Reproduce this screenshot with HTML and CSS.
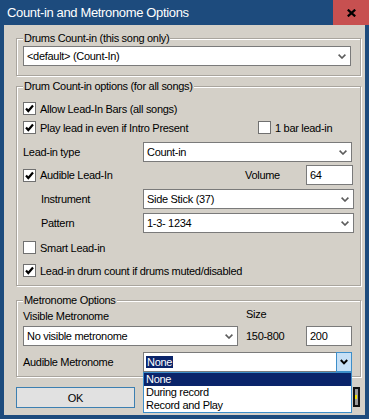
FILE: index.html
```html
<!DOCTYPE html>
<html lang="en">
<head>
    <meta charset="UTF-8">
    <title>Count-in and Metronome Options</title>
    <link rel="stylesheet" href="styles.css">
</head>
<body>
<div class="window">
    <div class="titlebar">
        <span class="title">Count-in and Metronome Options</span>
        <span class="close">
            <svg width="9" height="8" viewBox="0 0 9 8"><path d="M0.8 0.6 L8.2 7.4 M8.2 0.6 L0.8 7.4" stroke="#000" stroke-width="2.2" fill="none"/></svg>
        </span>
    </div>

    <div class="client">
        <fieldset class="group group-song">
            <legend>Drums Count-in (this song only)</legend>
            <div class="group-body song-body">
                <div class="combo combo-song">
                    <span class="combo-text">&lt;default&gt; (Count-In)</span>
                    <svg class="chev" width="8" height="5" viewBox="0 0 8 5"><polyline points="0.6,0.6 4,4 7.4,0.6" fill="none" stroke="#5c5c5c" stroke-width="1.6"/></svg>
                </div>
            </div>
        </fieldset>

        <fieldset class="group group-all">
            <legend>Drum Count-in options (for all songs)</legend>
            <div class="group-body all-body">
                <div class="row row-check">
                    <label class="check"><span class="box"><svg width="11" height="11" viewBox="0 0 11 11"><polyline points="2,5.5 4.3,8 9,2.5" fill="none" stroke="#000" stroke-width="2.2"/></svg></span>Allow Lead-In Bars (all songs)</label>
                </div>
                <div class="row row-check">
                    <label class="check w-play"><span class="box"><svg width="11" height="11" viewBox="0 0 11 11"><polyline points="2,5.5 4.3,8 9,2.5" fill="none" stroke="#000" stroke-width="2.2"/></svg></span>Play lead in even if Intro Present</label>
                    <label class="check"><span class="box"></span>1 bar lead-in</label>
                </div>
                <div class="row row-field mt5">
                    <span class="field-label">Lead-in type</span>
                    <div class="combo combo-mid">
                        <span class="combo-text">Count-in</span>
                        <svg class="chev" width="8" height="5" viewBox="0 0 8 5"><polyline points="0.6,0.6 4,4 7.4,0.6" fill="none" stroke="#5c5c5c" stroke-width="1.6"/></svg>
                    </div>
                </div>
                <div class="row row-field mt3">
                    <label class="check w-audible"><span class="box"><svg width="11" height="11" viewBox="0 0 11 11"><polyline points="2,5.5 4.3,8 9,2.5" fill="none" stroke="#000" stroke-width="2.2"/></svg></span>Audible Lead-In</label>
                    <span class="w-volume">Volume</span>
                    <div class="edit edit-volume">64</div>
                </div>
                <div class="row row-field mt4">
                    <span class="field-label sub">Instrument</span>
                    <div class="combo combo-sub">
                        <span class="combo-text">Side Stick (37)</span>
                        <svg class="chev" width="8" height="5" viewBox="0 0 8 5"><polyline points="0.6,0.6 4,4 7.4,0.6" fill="none" stroke="#5c5c5c" stroke-width="1.6"/></svg>
                    </div>
                </div>
                <div class="row row-field mt4">
                    <span class="field-label sub">Pattern</span>
                    <div class="combo combo-sub">
                        <span class="combo-text">1-3- 1234</span>
                        <svg class="chev" width="8" height="5" viewBox="0 0 8 5"><polyline points="0.6,0.6 4,4 7.4,0.6" fill="none" stroke="#5c5c5c" stroke-width="1.6"/></svg>
                    </div>
                </div>
                <div class="row row-check mt5">
                    <label class="check"><span class="box"></span>Smart Lead-in</label>
                </div>
                <div class="row row-check mt4">
                    <label class="check"><span class="box"><svg width="11" height="11" viewBox="0 0 11 11"><polyline points="2,5.5 4.3,8 9,2.5" fill="none" stroke="#000" stroke-width="2.2"/></svg></span>Lead-in drum count if drums muted/disabled</label>
                </div>
            </div>
        </fieldset>

        <fieldset class="group group-metro">
            <legend>Metronome Options</legend>
            <div class="group-body metro-body">
                <div class="row row-labels">
                    <span class="w-visible">Visible Metronome</span>
                    <span class="size-label">Size</span>
                </div>
                <div class="row row-field mt3">
                    <div class="combo combo-visible">
                        <span class="combo-text">No visible metronome</span>
                        <svg class="chev" width="8" height="5" viewBox="0 0 8 5"><polyline points="0.6,0.6 4,4 7.4,0.6" fill="none" stroke="#5c5c5c" stroke-width="1.6"/></svg>
                    </div>
                    <span class="w-range">150-800</span>
                    <div class="edit edit-size">200</div>
                </div>
                <div class="row row-field mt6">
                    <span class="field-label">Audible Metronome</span>
                    <div class="combo combo-mid combo-open">
                        <span class="combo-text"><span class="selected-text">None</span></span>
                        <span class="dd-btn"><svg width="8" height="6" viewBox="0 0 8 6"><polyline points="0.8,1 4,4.4 7.2,1" fill="none" stroke="#000" stroke-width="2"/></svg></span>
                        <ul class="droplist">
                            <li class="active">None</li>
                            <li>During record</li>
                            <li>Record and Play</li>
                        </ul>
                    </div>
                </div>
            </div>
        </fieldset>

        <div class="buttons">
            <div class="btn-ok">OK</div>
            <div class="help-btn"><span class="help-dot"></span></div>
        </div>
    </div>
</div>
</body>
</html>
```

FILE: styles.css
```css
* {
    box-sizing: border-box;
}
body {
    margin: 0;
    font-family: "Liberation Sans", Arial, sans-serif;
    font-size: 11px;
    letter-spacing: -0.3px;
    line-height: 14px;
    color: #000;
}
.window {
    width: 369px;
    height: 419px;
    background: #1d4b7d;
    display: flex;
    flex-direction: column;
    overflow: hidden;
}
.titlebar {
    height: 25px;
    flex: none;
    display: flex;
    align-items: center;
}
.title {
    flex: 1;
    padding-left: 7px;
    color: #fff;
    font-size: 13px;
    letter-spacing: -0.35px;
}
.close {
    width: 36px;
    height: 25px;
    background: #c75050;
    display: flex;
    align-items: center;
    justify-content: center;
    padding-left: 1px;
}
.client {
    flex: 1;
    margin: 0 4px 4px;
    background: #d4d0c8;
    display: flex;
    flex-direction: column;
}

/* group boxes */
.group {
    margin: 0 4px 0 12px;
    padding: 0;
    min-width: 0;
    border: 1px solid #a9a59e;
    box-shadow: inset 1px 1px 0 #fff, 1px 1px 0 #fff;
}
.group legend {
    margin-left: 6px;
    padding: 0 1px;
    line-height: 14px;
    background: #d4d0c8;
}
.group-body {
    display: flex;
    flex-direction: column;
    padding-left: 6px;
}
.group-song {
    margin-top: 6px;
}
.song-body {
    padding: 1px 0 9px 6px;
}
.group-all {
    margin-top: 3px;
}
.all-body {
    padding: 6px 0 5px 6px;
}
.group-metro {
    margin-top: 7px;
}
.metro-body {
    padding: 0 0 4px 6px;
}

/* rows */
.row {
    display: flex;
    align-items: center;
}
.row-check {
    height: 19px;
}
.row-field {
    height: 20px;
}
.row-labels {
    height: 16px;
}
.mt3 { margin-top: 3px; }
.mt4 { margin-top: 4px; }
.mt5 { margin-top: 5px; }
.mt6 { margin-top: 6px; }

.check {
    display: flex;
    align-items: center;
    gap: 4px;
}
.box {
    width: 13px;
    height: 13px;
    flex: none;
    background: #fff;
    border: 1px solid #707070;
    display: flex;
    align-items: center;
    justify-content: center;
}
.w-play {
    width: 235px;
}
.w-audible {
    width: 222px;
}
.w-volume {
    width: 61px;
}
.field-label {
    width: 120px;
    flex: none;
}
.field-label.sub {
    padding-left: 18px;
}
.w-visible {
    width: 223px;
    padding-top: 2px;
}
.size-label {
    padding-bottom: 2px;
}
.w-range {
    width: 60px;
    margin-left: 8px;
}

/* combo boxes and edits */
.combo,
.edit {
    height: 20px;
    background: #fff;
    border: 1px solid #7a7a7a;
    display: flex;
    align-items: center;
    padding-left: 3px;
}
.combo-text {
    flex: 1;
    white-space: nowrap;
}
.chev {
    margin-right: 4px;
}
.combo-song {
    width: 328px;
}
.combo-mid {
    width: 209px;
}
.combo-sub {
    width: 211px;
}
.combo-visible {
    width: 215px;
}
.edit-volume {
    width: 47px;
}
.edit-size {
    width: 46px;
}
.combo-open {
    position: relative;
    padding-left: 2px;
}
.selected-text {
    background: #0a246a;
    color: #fff;
    padding: 0 1px;
    line-height: 12px;
    display: inline-block;
}
.dd-btn {
    align-self: stretch;
    width: 16px;
    margin: -1px -1px -1px 0;
    background: #c6e0f6;
    border: 1px solid #3d8ec9;
    display: flex;
    align-items: center;
    justify-content: center;
}
.droplist {
    position: absolute;
    left: -1px;
    top: 19px;
    width: 209px;
    margin: 0;
    padding: 0;
    list-style: none;
    background: #fff;
    border: 1px solid #3d8ec9;
    z-index: 2;
}
.droplist li {
    line-height: 13px;
    padding-left: 2px;
}
.droplist li.active {
    background: #0a246a;
    color: #fff;
}

/* bottom buttons */
.buttons {
    display: flex;
    align-items: flex-start;
    margin: 10px 5px 0 12px;
}
.btn-ok {
    width: 119px;
    height: 21px;
    background: #e1e1e1;
    border: 1px solid #3c7fb1;
    display: flex;
    align-items: center;
    justify-content: center;
}
.help-btn {
    margin-left: auto;
    width: 7px;
    height: 20px;
    background: #9a9a9a;
    border: 2px solid #111;
    position: relative;
}
.help-dot {
    position: absolute;
    left: 0;
    top: 6px;
    width: 2px;
    height: 4px;
    background: #f2e600;
}
```
